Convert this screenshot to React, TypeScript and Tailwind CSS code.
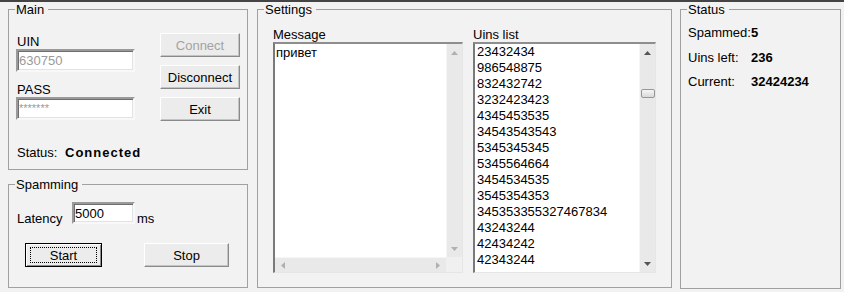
import type { ReactNode } from 'react';

const uins = [
  '23432434',
  '986548875',
  '832432742',
  '3232423423',
  '4345453535',
  '34543543543',
  '5345345345',
  '5345564664',
  '3454534535',
  '3545354353',
  '345353355327467834',
  '43243244',
  '42434242',
  '42343244',
];

function Group({ title, className, children }: { title: string; className?: string; children?: ReactNode }) {
  return (
    <fieldset className={`min-w-0 border border-[#a0a0a0] ${className ?? ''}`}>
      <legend className="ml-[6px] pl-px pr-[4px] leading-[15px]">{title}</legend>
      {children}
    </fieldset>
  );
}

function Arrow({ dir, color }: { dir: 'up' | 'down' | 'left' | 'right'; color: string }) {
  const vert = dir === 'up' || dir === 'down';
  const pts = {
    up: '0,4 7,4 3.5,0',
    down: '0,0 7,0 3.5,4',
    left: '4,0 4,7 0,3.5',
    right: '0,0 0,7 4,3.5',
  }[dir];
  return (
    <svg width={vert ? 7 : 4} height={vert ? 4 : 7} viewBox={vert ? '0 0 7 4' : '0 0 4 7'}>
      <polygon points={pts} fill={color} />
    </svg>
  );
}

function Button({ label, disabled, focused, className }: { label: string; disabled?: boolean; focused?: boolean; className?: string }) {
  return (
    <div
      className={`flex h-[24px] items-center justify-center border bg-[#ececec] ${
        focused
          ? 'border-black shadow-[inset_1px_1px_0_#ffffff,inset_-1px_-1px_0_#8c8c8c]'
          : 'border-t-white border-l-white border-r-[#8a8a8a] border-b-[#8a8a8a] shadow-[inset_-1px_-1px_0_#c4c4c4]'
      } ${className ?? ''}`}
    >
      {focused ? (
        <span className="flex h-[16px] w-[calc(100%-8px)] items-center justify-center border border-dotted border-black">
          {label}
        </span>
      ) : (
        <span className={disabled ? 'text-[#a3a3a3]' : ''}>{label}</span>
      )}
    </div>
  );
}

function Field({ value, gray, className }: { value: string; gray?: boolean; className?: string }) {
  return (
    <div
      className={`flex items-center border-2 border-t-[#9a9a9a] border-l-[#9a9a9a] border-b-[#f8f8f8] border-r-[#f8f8f8] bg-white pl-px shadow-[inset_1px_1px_0_#6e6e6e,inset_-1px_-1px_0_#e3e3e3] ${
        gray ? 'text-[#9a9a9a]' : ''
      } ${className ?? ''}`}
    >
      {value}
    </div>
  );
}

function VScroll({ enabled }: { enabled?: boolean }) {
  const c = enabled ? '#555555' : '#b0b0b0';
  return (
    <div className="flex w-[16px] flex-col border-l border-[#f6f6f6] bg-[#e9e9e9]">
      <div className="flex h-[17px] items-center justify-center">
        <Arrow dir="up" color={c} />
      </div>
      {enabled && (
        <div className="ml-px mt-[28px] h-[9px] w-[14px] rounded-[2px] border border-[#979797] bg-gradient-to-b from-[#f7f7f7] to-[#d8d8d8]" />
      )}
      <div className="flex-1" />
      <div className="flex h-[17px] items-center justify-center">
        <Arrow dir="down" color={c} />
      </div>
    </div>
  );
}

export default function App() {
  return (
    <div className="h-[292px] w-[844px] overflow-hidden bg-[#f2f2f2] font-['Liberation_Sans',Arial,sans-serif] text-[13px] leading-[15px] text-black">
      <div className="h-[2px] bg-[#444444]" />
      <div className="flex pl-[8px]">
        {/* Left column */}
        <div className="flex w-[240px] flex-col">
          <Group title="Main" className="h-[168px]">
            <div className="flex pl-[7px]">
              <div className="flex w-[119px] flex-col">
                <div className="mt-[17px] pl-px">UIN</div>
                <Field value="630750" gray className="h-[23px]" />
                <div className="mt-[10px] pl-px">PASS</div>
                <Field value="*******" gray className="h-[23px] text-[11px]" />
              </div>
              <div className="ml-[25px] mt-[16px] flex flex-col gap-[8px]">
                <Button label="Connect" disabled className="w-[80px]" />
                <Button label="Disconnect" className="w-[80px]" />
                <Button label="Exit" className="w-[80px]" />
              </div>
            </div>
            <div className="mt-[24px] flex pl-[8px]">
              <span className="w-[48px]">Status:</span>
              <span className="font-bold tracking-[1px]">Connected</span>
            </div>
          </Group>

          <Group title="Spamming" className="mt-[7px] h-[111px]">
            <div className="mt-[10px] flex items-start pl-[8px]">
              <span className="mt-[9px] w-[55px]">Latency</span>
              <Field value="5000" className="h-[22px] w-[63px]" />
              <span className="ml-[2px] mt-[9px]">ms</span>
            </div>
            <div className="mt-[17px] flex pl-[16px]">
              <Button label="Start" focused className="w-[77px]" />
              <Button label="Stop" className="ml-[42px] w-[85px]" />
            </div>
          </Group>
        </div>

        {/* Settings */}
        <Group title="Settings" className="ml-[9px] h-[286px] w-[415px]">
          <div className="mt-[10px] flex gap-[10px] pl-[15px]">
            <div className="flex w-[190px] flex-col">
              <span>Message</span>
              <div className="flex h-[231px] flex-col border-l-2 border-t-2 border-b border-r border-l-[#7a7a7a] border-t-[#8e8e8e] border-b-[#e6e6e6] border-r-[#e6e6e6] bg-white">
                <div className="flex flex-1">
                  <div className="flex-1 pl-px pt-px">привет</div>
                  <VScroll />
                </div>
                <div className="flex h-[15px]">
                  <div className="flex flex-1 items-center justify-between border-t border-[#f6f6f6] bg-[#e9e9e9] px-[6px]">
                    <Arrow dir="left" color="#b0b0b0" />
                    <Arrow dir="right" color="#b0b0b0" />
                  </div>
                  <div className="w-[16px] bg-[#f0f0f0]" />
                </div>
              </div>
            </div>
            <div className="flex w-[183px] flex-col">
              <span>Uins list</span>
              <div className="flex h-[231px] border-l-2 border-t-2 border-b border-r border-l-[#7a7a7a] border-t-[#8e8e8e] border-b-[#e6e6e6] border-r-[#e6e6e6] bg-white">
                <div className="flex-1 overflow-hidden pl-[2px] leading-[16px]">
                  {uins.map((u) => (
                    <div key={u}>{u}</div>
                  ))}
                </div>
                <VScroll enabled />
              </div>
            </div>
          </div>
        </Group>

        {/* Status */}
        <Group title="Status" className="ml-[8px] h-[287px] w-[161px]">
          <div className="mt-[4px] grid grid-cols-[63px_1fr] pl-[7px] leading-[24.5px]">
            <span>Spammed:</span>
            <span className="font-bold">5</span>
            <span>Uins left:</span>
            <span className="font-bold">236</span>
            <span>Current:</span>
            <span className="font-bold">32424234</span>
          </div>
        </Group>
      </div>
    </div>
  );
}
